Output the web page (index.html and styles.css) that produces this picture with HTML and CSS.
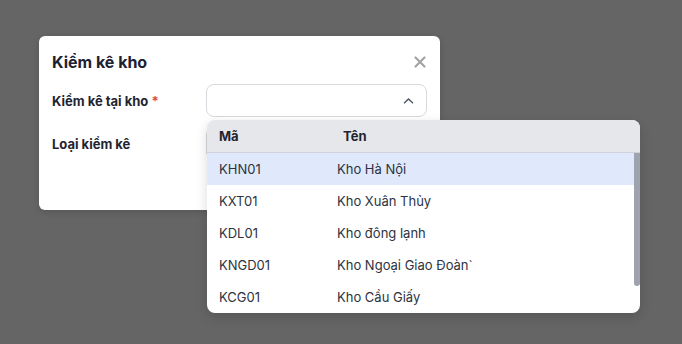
FILE: index.html
```html
<!DOCTYPE html>
<html lang="vi">
<head>
    <meta charset="UTF-8">
    <meta name="viewport" content="width=device-width, initial-scale=1.0">
    <title>Kiểm kê kho</title>
    <link rel="stylesheet" href="styles.css">
</head>
<body>

    <div class="modal">
        <div class="modal-header">
            <h2>Kiểm kê kho</h2>
            <button class="close-btn" aria-label="Đóng">
                <svg width="12" height="12" viewBox="0 0 12 12">
                    <path d="M1.5 1.5 L10.5 10.5 M10.5 1.5 L1.5 10.5" stroke="#a3a3a3" stroke-width="2.2" stroke-linecap="round"/>
                </svg>
            </button>
        </div>

        <div class="form-row">
            <label>Kiểm kê tại kho <span class="required">*</span></label>
            <div class="select open">
                <svg width="11" height="6" viewBox="0 0 11 6">
                    <path d="M1 5.3 L5.5 1 L10 5.3" fill="none" stroke="#4b5563" stroke-width="1.3"/>
                </svg>
            </div>
        </div>

        <div class="form-row">
            <label>Loại kiểm kê</label>
            <div class="select"></div>
        </div>
    </div>

    <div class="dropdown">
        <div class="dropdown-head">
            <span class="col-code">Mã</span>
            <span class="col-name">Tên</span>
        </div>
        <div class="dropdown-body">
            <div class="option active"><span class="col-code">KHN01</span><span class="col-name">Kho Hà Nội</span></div>
            <div class="option"><span class="col-code">KXT01</span><span class="col-name">Kho Xuân Thủy</span></div>
            <div class="option"><span class="col-code">KDL01</span><span class="col-name">Kho đông lạnh</span></div>
            <div class="option"><span class="col-code">KNGD01</span><span class="col-name">Kho Ngoại Giao Đoàn`</span></div>
            <div class="option"><span class="col-code">KCG01</span><span class="col-name">Kho Cầu Giấy</span></div>
            <div class="scrollbar"></div>
        </div>
    </div>

</body>
</html>
```

FILE: styles.css
```css
body {
    margin: 0;
    font-family: Inter, "Noto Sans", sans-serif;
    background-color: #656565;
    width: 682px;
    height: 344px;
    overflow: hidden;
}

.modal {
    margin: 36px 0 0 39px;
    width: 401px;
    height: 174px;
    box-sizing: border-box;
    padding: 14px 13px 0 13px;
    background: white;
    border-radius: 6px;
    box-shadow: 0 2px 6px rgba(0, 0, 0, 0.15);
}

.modal-header {
    display: flex;
    justify-content: space-between;
    align-items: center;
    height: 24px;
}

h2 {
    margin: 0;
    font-size: 16px;
    font-weight: 700;
    color: #1b2130;
}

.close-btn {
    border: none;
    background: none;
    padding: 0;
    margin-right: 1px;
    display: flex;
}

.form-row {
    display: flex;
    align-items: center;
    height: 33px;
    margin-top: 10px;
}

.form-row:first-of-type {
    margin-top: 11px;
}

label {
    width: 154px;
    font-size: 13px;
    font-weight: 700;
    color: #1f2430;
}

.required {
    color: #e24c4c;
}

.select {
    flex: 1;
    height: 33px;
    box-sizing: border-box;
    border: 1px solid #d6d9de;
    border-radius: 8px;
    display: flex;
    align-items: center;
    justify-content: flex-end;
    padding-right: 12px;
}

.dropdown {
    position: absolute;
    left: 207px;
    top: 120px;
    width: 433px;
    height: 193px;
    background: white;
    border-radius: 8px;
    overflow: hidden;
    box-shadow: 0 4px 12px rgba(0, 0, 0, 0.15);
    font-size: 13px;
}

.dropdown-head {
    display: flex;
    align-items: center;
    height: 32px;
    background: #e6e7ea;
    border-bottom: 1px solid #cfd2d8;
    font-weight: 700;
    color: #1f2430;
}

.dropdown-head .col-name {
    padding-left: 6px;
}

.dropdown-body {
    position: relative;
}

.option {
    display: flex;
    align-items: center;
    height: 32px;
    color: #2d3340;
}

.option.active {
    background: #e0e9fb;
}

.col-code {
    width: 118px;
    padding-left: 12px;
}

.scrollbar {
    position: absolute;
    right: 0;
    top: 0;
    width: 6px;
    height: 133px;
    background: #9ea3ad;
    border-radius: 0 0 3px 3px;
}
```
